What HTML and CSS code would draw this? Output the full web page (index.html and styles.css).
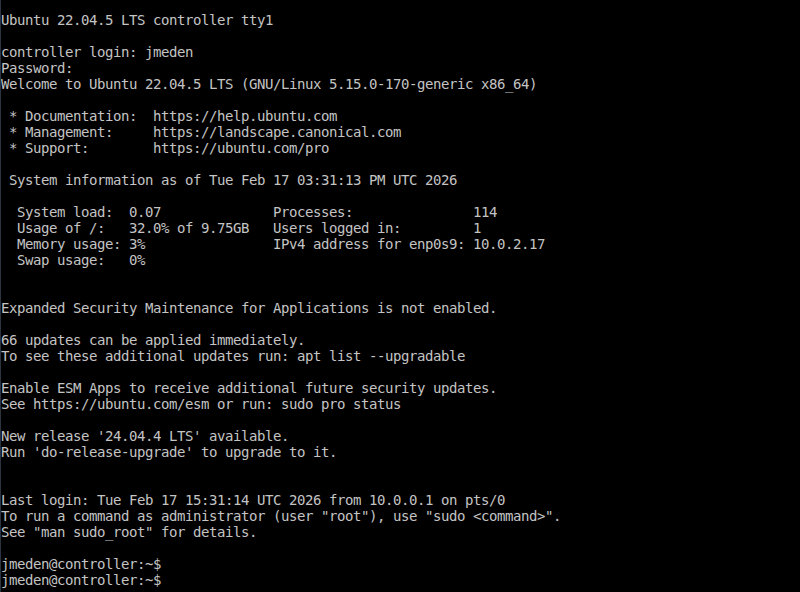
FILE: index.html
```html
<!DOCTYPE html>
<html lang="en">
<head>
<meta charset="utf-8">
<title>tty1</title>
<link rel="stylesheet" href="styles.css">
</head>
<body>
<main class="screen">
<pre class="console">Ubuntu 22.04.5 LTS controller tty1

controller login: jmeden
Password:
Welcome to Ubuntu 22.04.5 LTS (GNU/Linux 5.15.0-170-generic x86_64)

 * Documentation:  https://help.ubuntu.com
 * Management:     https://landscape.canonical.com
 * Support:        https://ubuntu.com/pro

 System information as of Tue Feb 17 03:31:13 PM UTC 2026

  System load:  0.07              Processes:               114
  Usage of /:   32.0% of 9.75GB   Users logged in:         1
  Memory usage: 3%                IPv4 address for enp0s9: 10.0.2.17
  Swap usage:   0%


Expanded Security Maintenance for Applications is not enabled.

66 updates can be applied immediately.
To see these additional updates run: apt list --upgradable

Enable ESM Apps to receive additional future security updates.
See https://ubuntu.com/esm or run: sudo pro status

New release '24.04.4 LTS' available.
Run 'do-release-upgrade' to upgrade to it.


Last login: Tue Feb 17 15:31:14 UTC 2026 from 10.0.0.1 on pts/0
To run a command as administrator (user "root"), use "sudo &lt;command&gt;".
See "man sudo_root" for details.

jmeden@controller:~$
jmeden@controller:~$</pre>
</main>
</body>
</html>
```
FILE: styles.css
```css
html, body {
  margin: 0;
  padding: 0;
  background: #000;
}
.screen {
  width: 800px;
  height: 592px;
  box-sizing: border-box;
  border-left: 1px solid #2c3440;
  background: #000;
  overflow: hidden;
}
.console {
  margin: 0;
  padding: 12px 0 0 0;
  font-family: "DejaVu Sans Mono", monospace;
  font-size: 14px;
  letter-spacing: -0.43px;
  line-height: 16px;
  color: #c4c4c4;
  white-space: pre;
}
```
